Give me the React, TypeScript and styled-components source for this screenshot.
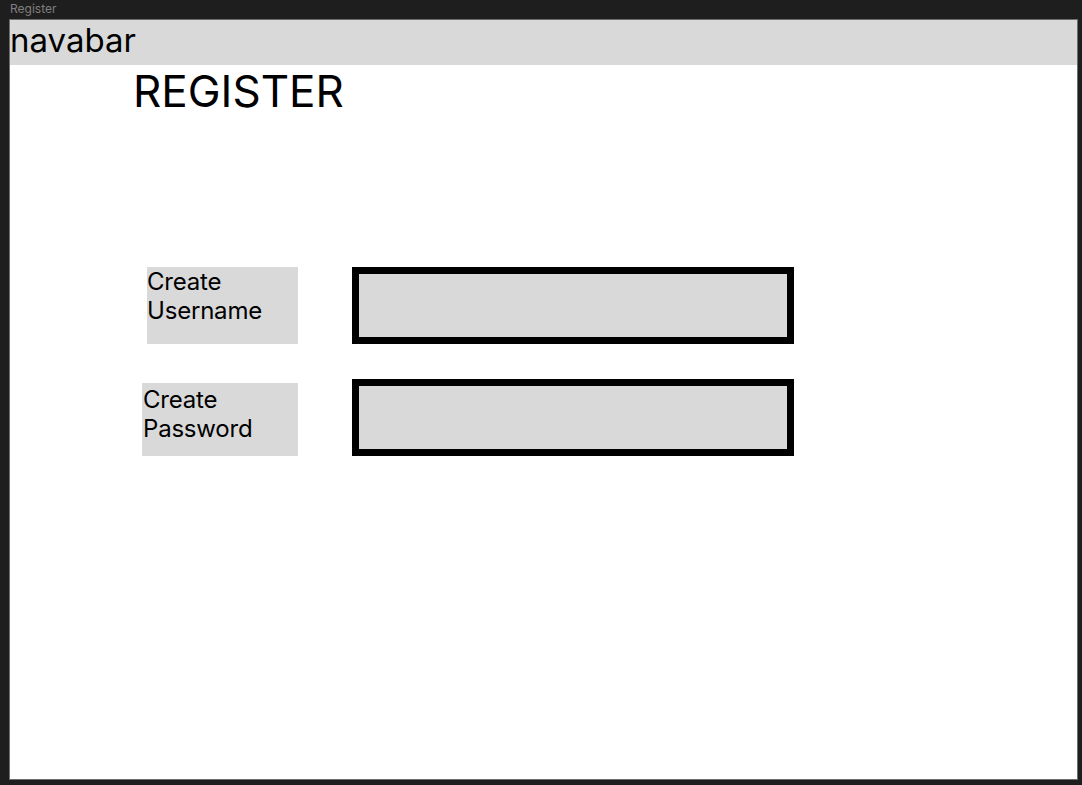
import React from "react";
import styled, { createGlobalStyle } from "styled-components";

const Global = createGlobalStyle`
  html, body {
    margin: 0;
    padding: 0;
    background: #1e1e1e;
  }
  body {
    font-family: Inter, "Noto Sans", sans-serif;
  }
`;

const Page = styled.div`
  width: 1082px;
  height: 785px;
  padding-left: 9px;
  box-sizing: border-box;
  background: #1e1e1e;
`;

const Caption = styled.div`
  height: 19px;
  font-size: 12px;
  line-height: 18px;
  color: #7f7f7f;
  padding-left: 1px;
`;

const Frame = styled.div`
  width: 1069px;
  height: 761px;
  box-sizing: border-box;
  border: 1px solid #6e6e6e;
  background: #ffffff;
  display: flex;
  flex-direction: column;
`;

const Navbar = styled.div`
  height: 45px;
  background: #d9d9d9;
  font-size: 33px;
  line-height: 40px;
  color: #000;
  flex-shrink: 0;
`;

const Title = styled.h1`
  margin: 4px 0 0 123px;
  font-size: 44px;
  font-weight: 400;
  line-height: 44px;
  color: #000;
`;

const Form = styled.div`
  margin-top: 154px;
  display: grid;
  grid-template-columns: 288px 442px;
  column-gap: 54px;
  row-gap: 35px;
`;

const Label = styled.div<{ $width: number; $height: number; $padLeft: number; $padTop: number }>`
  justify-self: end;
  align-self: end;
  width: ${(p) => p.$width}px;
  height: ${(p) => p.$height}px;
  box-sizing: border-box;
  padding-left: ${(p) => p.$padLeft}px;
  padding-top: ${(p) => p.$padTop}px;
  background: #d9d9d9;
  font-size: 24px;
  line-height: 29px;
  letter-spacing: -0.2px;
  color: #000;
`;

const Input = styled.input`
  width: 442px;
  height: 77px;
  box-sizing: border-box;
  border: 7px solid #000;
  background: #d9d9d9;
  outline: none;
  padding: 0 8px;
  font-family: inherit;
  font-size: 20px;
`;

export default function App() {
  return (
    <>
      <Global />
      <Page>
        <Caption>Register</Caption>
        <Frame>
          <Navbar>navabar</Navbar>
          <Title>REGISTER</Title>
          <Form>
            <Label $width={151} $height={77} $padLeft={0} $padTop={0}>
              Create
              <br />
              Username
            </Label>
            <Input type="text" aria-label="Create Username" />
            <Label $width={156} $height={73} $padLeft={1} $padTop={2}>
              Create
              <br />
              Password
            </Label>
            <Input type="password" aria-label="Create Password" />
          </Form>
        </Frame>
      </Page>
    </>
  );
}
